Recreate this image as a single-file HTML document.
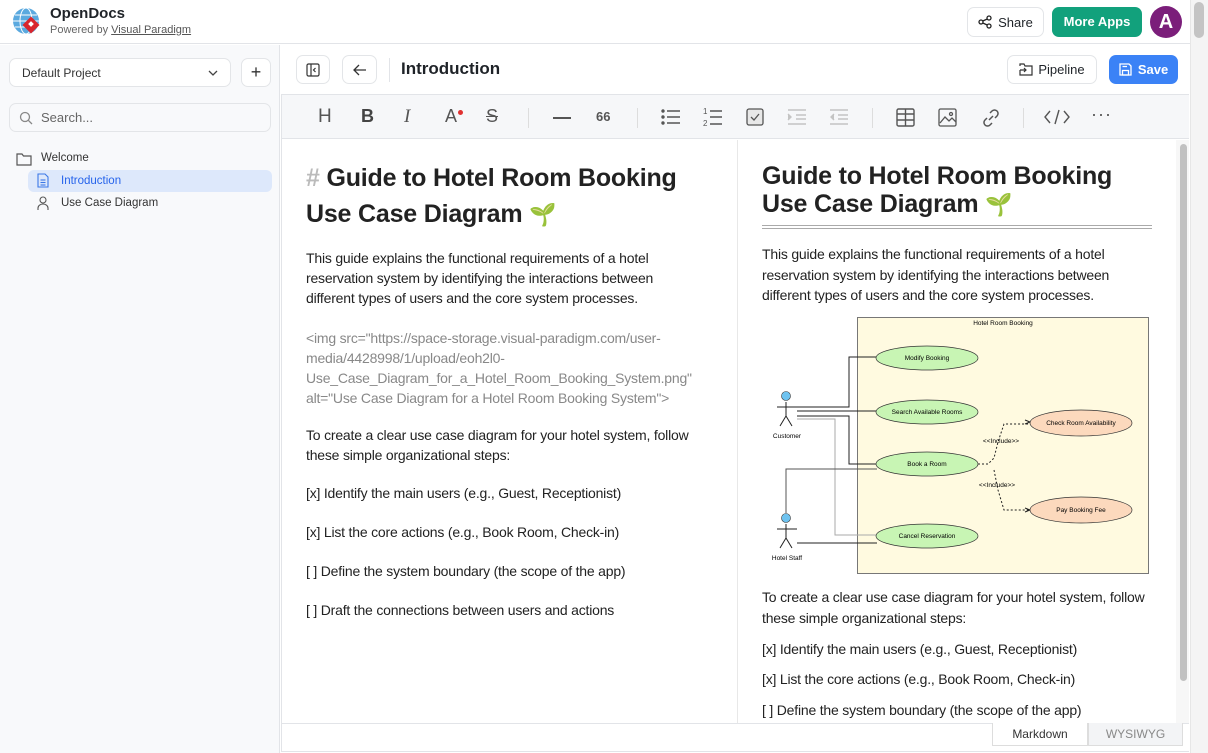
<!DOCTYPE html>
<html><head><meta charset="utf-8"><style>
*{box-sizing:border-box;margin:0;padding:0}
body{width:1208px;height:753px;overflow:hidden;background:#fff;font-family:"Liberation Sans",sans-serif;color:#1f2328;position:relative}
.a{position:absolute;white-space:nowrap}
.btn{position:absolute;border:1px solid #e3e5e8;border-radius:7px;background:#fff;display:flex;align-items:center;justify-content:center}
.tb{position:absolute;top:106px;color:#555}
.c{font-size:14px;color:#222;line-height:20px;letter-spacing:-0.2px}
</style></head><body>
<!-- header -->
<div class="a" style="left:0;top:0;width:1190px;height:44px;border-bottom:1px solid #e2e4e8;background:#fff"></div>
<svg class="a" style="left:12px;top:7px" width="30" height="30" viewBox="0 0 30 30"><circle cx="14" cy="14" r="13" fill="#5aa9df"/><g stroke="#fff" stroke-width="1" fill="none"><ellipse cx="14" cy="14" rx="6" ry="13"/><line x1="1" y1="14" x2="27" y2="14"/><line x1="3" y1="8" x2="25" y2="8"/><line x1="3" y1="20" x2="25" y2="20"/></g><rect x="13" y="12" width="12" height="12" transform="rotate(45 19 18)" fill="#d9262d"/><rect x="17" y="15" width="4" height="4" transform="rotate(45 19 17)" fill="#fff"/></svg>
<div class="a" style="left:50px;top:5px;font-size:15px;font-weight:bold;color:#1f2328">OpenDocs</div>
<div class="a" style="left:50px;top:24px;font-size:11px;color:#666">Powered by <span style="text-decoration:underline;color:#555">Visual Paradigm</span></div>
<div class="btn" style="left:967px;top:7px;width:77px;height:30px;font-size:13px;gap:6px"><svg width="14" height="14" viewBox="0 0 14 14" fill="none" stroke="#222" stroke-width="1.3"><circle cx="11" cy="3" r="2"/><circle cx="3" cy="7" r="2"/><circle cx="11" cy="11" r="2"/><line x1="4.8" y1="6" x2="9.2" y2="4"/><line x1="4.8" y1="8" x2="9.2" y2="10"/></svg>Share</div>
<div class="a" style="left:1052px;top:7px;width:90px;height:30px;border-radius:7px;background:#12a17c;color:#fff;font-size:13px;font-weight:bold;text-align:center;line-height:30px">More Apps</div>
<div class="a" style="left:1150px;top:6px;width:32px;height:32px;border-radius:50%;background:#7b1e7a;color:#fff;font-weight:bold;font-size:20px;text-align:center;line-height:32px">A</div>
<!-- page scrollbar -->
<div class="a" style="left:1190px;top:0;width:18px;height:753px;background:#f4f4f4;border-left:1px solid #e6e6e6"></div>
<div class="a" style="left:1194px;top:2px;width:10px;height:36px;border-radius:5px;background:#c4c4c4"></div>
<!-- sidebar -->
<div class="a" style="left:0;top:45px;width:280px;height:708px;background:#f8f9fb;border-right:1px solid #e2e4e8"></div>
<div class="btn" style="left:9px;top:58px;width:222px;height:29px;justify-content:space-between;padding:0 12px;font-size:12px;color:#333">Default Project<svg width="10" height="6" viewBox="0 0 10 6" fill="none" stroke="#444" stroke-width="1.3"><path d="M1 1l4 4 4-4"/></svg></div>
<div class="btn" style="left:241px;top:58px;width:30px;height:29px;font-size:18px;color:#333">+</div>
<div class="btn" style="left:9px;top:103px;width:262px;height:29px;justify-content:flex-start;padding-left:9px;gap:8px;font-size:13px;color:#666;background:#f8f9fb"><svg width="14" height="14" viewBox="0 0 14 14" fill="none" stroke="#888" stroke-width="1.3"><circle cx="6" cy="6" r="4.5"/><line x1="9.3" y1="9.3" x2="13" y2="13"/></svg>Search...</div>
<svg class="a" style="left:16px;top:152px" width="16" height="14" viewBox="0 0 16 14" fill="none" stroke="#555" stroke-width="1.2"><path d="M1 2h5l1.5 2H15v9H1z"/></svg>
<div class="a" style="left:41px;top:152px;font-size:11.5px;color:#333">Welcome</div>
<div class="a" style="left:28px;top:170px;width:244px;height:22px;border-radius:6px;background:#dde8fb"></div>
<svg class="a" style="left:37px;top:173px" width="12" height="15" viewBox="0 0 12 15" fill="none" stroke="#3b78e7" stroke-width="1.1"><path d="M1 1h7l3 3v10H1z"/><line x1="3.5" y1="7" x2="8.5" y2="7"/><line x1="3.5" y1="9.5" x2="8.5" y2="9.5"/><line x1="3.5" y1="12" x2="8.5" y2="12"/></svg>
<div class="a" style="left:61px;top:175px;font-size:11.5px;color:#2563eb">Introduction</div>
<svg class="a" style="left:37px;top:196px" width="12" height="15" viewBox="0 0 12 15" fill="none" stroke="#555" stroke-width="1.1"><circle cx="6" cy="4" r="3"/><path d="M1 14v-2a5 4 0 0 1 10 0v2"/></svg>
<div class="a" style="left:61px;top:197px;font-size:11.5px;color:#333">Use Case Diagram</div>
<!-- title bar -->
<div class="btn" style="left:296px;top:55px;width:34px;height:29px"><svg width="14" height="14" viewBox="0 0 14 14" fill="none" stroke="#333" stroke-width="1.2"><rect x="1" y="1" width="12" height="12" rx="1.5"/><line x1="5" y1="1" x2="5" y2="13"/><path d="M9.5 5l-2 2 2 2"/></svg></div>
<div class="btn" style="left:342px;top:55px;width:35px;height:29px"><svg width="14" height="12" viewBox="0 0 14 12" fill="none" stroke="#333" stroke-width="1.3"><path d="M6 1L1 6l5 5M1 6h12"/></svg></div>
<div class="a" style="left:389px;top:58px;width:1px;height:24px;background:#e2e4e8"></div>
<div class="a" style="left:401px;top:59px;font-size:17px;font-weight:bold;color:#1f2328">Introduction</div>
<div class="btn" style="left:1007px;top:55px;width:90px;height:29px;gap:5px;font-size:13px"><svg width="14" height="13" viewBox="0 0 14 13" fill="none" stroke="#333" stroke-width="1.2"><path d="M1 3V1h4l1 2h7v9H1V7"/><path d="M1 7h6M5 5l2 2-2 2"/></svg>Pipeline</div>
<div class="a" style="left:1109px;top:55px;width:69px;height:29px;border-radius:7px;background:#3b82f6;color:#fff;font-size:13px;font-weight:bold;display:flex;align-items:center;justify-content:center;gap:6px"><svg width="13" height="13" viewBox="0 0 13 13" fill="none" stroke="#fff" stroke-width="1.3"><path d="M1 1h9l2 2v9H1z"/><rect x="3.5" y="7.5" width="6" height="4.5"/><line x1="3.5" y1="3.5" x2="8" y2="3.5"/></svg>Save</div>
<!-- editor frame -->
<div class="a" style="left:281px;top:94px;width:908px;height:658px;border:1px solid #e2e4e8;border-right:none"></div>
<div class="a" style="left:282px;top:95px;width:907px;height:44px;background:#f6f7f9;border-bottom:1px solid #e2e4e8"></div>
<div class="a" style="left:737px;top:140px;width:1px;height:583px;background:#e8e8e8"></div>
<!-- toolbar icons -->
<div class="tb a" style="left:318px;top:106px;font-size:19px;color:#555">H</div>
<div class="tb a" style="left:361px;top:106px;font-size:18px;font-weight:bold;color:#444">B</div>
<div class="tb a" style="left:404px;top:106px;font-size:19px;font-style:italic;font-family:'Liberation Serif',serif;color:#555">I</div>
<div class="tb a" style="left:445px;top:106px;font-size:18px;color:#555">A</div>
<div class="a" style="left:458px;top:110px;width:5px;height:5px;border-radius:50%;background:#e03131"></div>
<div class="tb a" style="left:486px;top:106px;font-size:18px;color:#555;text-decoration:line-through">S</div>
<div class="a" style="left:528px;top:108px;width:1px;height:20px;background:#ddd"></div>
<div class="a" style="left:553px;top:117px;width:18px;height:2px;background:#555"></div>
<div class="tb a" style="left:596px;top:109px;font-size:13px;font-weight:bold;color:#555">66</div>
<div class="a" style="left:637px;top:108px;width:1px;height:20px;background:#ddd"></div>
<svg class="a" style="left:661px;top:108px" width="20" height="18" viewBox="0 0 20 18" stroke="#555" stroke-width="1.4" fill="#555"><circle cx="2" cy="3" r="1" /><circle cx="2" cy="9" r="1"/><circle cx="2" cy="15" r="1"/><path d="M6 3h13M6 9h13M6 15h13" fill="none"/></svg>
<svg class="a" style="left:703px;top:106px" width="20" height="22" viewBox="0 0 20 22" stroke="#555" stroke-width="1.4" fill="none"><path d="M7 5h12M7 11h12M7 18h12"/><text x="0" y="8" font-size="8" fill="#555" stroke="none" font-family="Liberation Sans">1</text><text x="0" y="20" font-size="8" fill="#555" stroke="none" font-family="Liberation Sans">2</text></svg>
<svg class="a" style="left:746px;top:108px" width="18" height="18" viewBox="0 0 18 18" fill="none" stroke="#555" stroke-width="1.3"><rect x="1" y="1" width="16" height="16" rx="2" fill="#e8e8e8"/><path d="M5 9l3 3 5-6"/></svg>
<svg class="a" style="left:787px;top:109px" width="20" height="16" viewBox="0 0 20 16" fill="none" stroke="#c4c4c4" stroke-width="1.4"><path d="M1 1h18M9 6h10M9 10h10M1 15h18"/><path d="M1 5l3 3-3 3" fill="#c4c4c4"/></svg>
<svg class="a" style="left:829px;top:109px" width="20" height="16" viewBox="0 0 20 16" fill="none" stroke="#c4c4c4" stroke-width="1.4"><path d="M1 1h18M9 6h10M9 10h10M1 15h18"/><path d="M5 5L2 8l3 3" fill="#c4c4c4"/></svg>
<div class="a" style="left:872px;top:108px;width:1px;height:20px;background:#ddd"></div>
<svg class="a" style="left:896px;top:108px" width="19" height="19" viewBox="0 0 19 19" fill="none" stroke="#555" stroke-width="1.4"><rect x="1" y="1" width="17" height="17" rx="1.5"/><path d="M1 6h17M9.5 1v17M1 12h17"/></svg>
<svg class="a" style="left:938px;top:108px" width="19" height="19" viewBox="0 0 19 19" fill="none" stroke="#555" stroke-width="1.3"><rect x="1" y="1" width="17" height="17" rx="1.5"/><path d="M2 15l5-6 4 4 3-3 4 4"/><circle cx="13" cy="6" r="1.5"/></svg>
<svg class="a" style="left:981px;top:108px" width="20" height="20" viewBox="0 0 20 20" fill="none" stroke="#555" stroke-width="1.5"><path d="M8 12l4-4M9 5l2-2a3.5 3.5 0 0 1 5 5l-2 2M11 15l-2 2a3.5 3.5 0 0 1-5-5l2-2"/></svg>
<div class="a" style="left:1023px;top:108px;width:1px;height:20px;background:#ddd"></div>
<svg class="a" style="left:1044px;top:109px" width="26" height="16" viewBox="0 0 26 16" fill="none" stroke="#555" stroke-width="1.4"><path d="M6 2L1 8l5 6M20 2l5 6-5 6M15 1l-4 14"/></svg>
<div class="tb a" style="left:1091px;top:104px;font-size:18px;color:#555;letter-spacing:1px">···</div>
<!-- left markdown -->
<div class="a" style="left:306px;top:160px;font-size:25px;font-weight:bold;line-height:36px;color:#222;letter-spacing:-0.2px"><span style="color:#bbb">#</span> Guide to Hotel Room Booking<br>Use Case Diagram <span style="color:#58a832;font-size:22px">🌱</span></div>
<div class="a c" style="left:306px;top:248px">This guide explains the functional requirements of a hotel<br>reservation system by identifying the interactions between<br>different types of users and the core system processes.</div>
<div class="a c" style="left:306px;top:328px;color:#888">&lt;img src="https://space-storage.visual-paradigm.com/user-<br>media/4428998/1/upload/eoh2l0-<br>Use_Case_Diagram_for_a_Hotel_Room_Booking_System.png"<br>alt="Use Case Diagram for a Hotel Room Booking System"&gt;</div>
<div class="a c" style="left:306px;top:425px">To create a clear use case diagram for your hotel system, follow<br>these simple organizational steps:</div>
<div class="a c" style="left:306px;top:483px">[x] Identify the main users (e.g., Guest, Receptionist)</div>
<div class="a c" style="left:306px;top:522px">[x] List the core actions (e.g., Book Room, Check-in)</div>
<div class="a c" style="left:306px;top:561px">[ ] Define the system boundary (the scope of the app)</div>
<div class="a c" style="left:306px;top:600px">[ ] Draft the connections between users and actions</div>
<!-- right preview -->
<div class="a" style="left:762px;top:162px;font-size:25px;font-weight:bold;line-height:28px;color:#222;letter-spacing:-0.2px">Guide to Hotel Room Booking<br>Use Case Diagram <span style="color:#58a832;font-size:22px">🌱</span></div>
<div class="a" style="left:762px;top:225px;width:390px;height:4px;border-top:1px solid #aaa;border-bottom:1px solid #aaa"></div>
<div class="a c" style="left:762px;top:244px;line-height:20.5px">This guide explains the functional requirements of a hotel<br>reservation system by identifying the interactions between<br>different types of users and the core system processes.</div>
<svg class="a" style="left:750px;top:310px" width="410" height="270" viewBox="750 310 410 270" font-family="Liberation Sans" font-size="6.5" text-anchor="middle">
<rect x="857.5" y="317.5" width="291" height="256" fill="#fffae0" stroke="#777"/>
<text x="1003" y="325">Hotel Room Booking</text>
<g fill="none" stroke="#222" stroke-width="1">
<path d="M797 407h52v-50h28M797 411h80M797 416h52v48h28"/>
<path d="M797 419h38v116h42" stroke="#aaa"/>
<path d="M786 513v-44h91" stroke="#555"/>
<path d="M797 543h80"/>
<path d="M978 464h10l6-6l4-16l6-18h26M994 470l4 20l6 20h26" stroke-dasharray="2 2"/>
<path d="M1025 420l5 2-5 2M1025 508l5 2-5 2"/>
<path d="M777 407h20M786 402v14l-6 10M786 416l6 10M777 529h20M786 524v14l-6 10M786 538l6 10"/>
</g>
<circle cx="786" cy="396" r="4.5" fill="#6ec3f0" stroke="#333" stroke-width=".6"/>
<circle cx="786" cy="518" r="4.5" fill="#6ec3f0" stroke="#333" stroke-width=".6"/>
<text x="787" y="438">Customer</text><text x="787" y="560">Hotel Staff</text>
<g stroke="#333" stroke-width=".7"><ellipse cx="927" cy="358" rx="51" ry="12" fill="#c8f5b4"/><ellipse cx="927" cy="412" rx="51" ry="12" fill="#c8f5b4"/><ellipse cx="927" cy="464" rx="51" ry="12" fill="#c8f5b4"/><ellipse cx="927" cy="536" rx="51" ry="12" fill="#c8f5b4"/><ellipse cx="1081" cy="423" rx="51" ry="13" fill="#fcd9bd"/><ellipse cx="1081" cy="510" rx="51" ry="13" fill="#fcd9bd"/></g>
<text x="927" y="360">Modify Booking</text><text x="927" y="414">Search Available Rooms</text><text x="927" y="466">Book a Room</text><text x="927" y="538">Cancel Reservation</text><text x="1081" y="425">Check Room Availability</text><text x="1081" y="512">Pay Booking Fee</text>
<text x="1001" y="443">&lt;&lt;Include&gt;&gt;</text><text x="997" y="487">&lt;&lt;Include&gt;&gt;</text>
</svg>
<div class="a c" style="left:762px;top:587px;line-height:20.5px">To create a clear use case diagram for your hotel system, follow<br>these simple organizational steps:</div>
<div class="a c" style="left:762px;top:639px">[x] Identify the main users (e.g., Guest, Receptionist)</div>
<div class="a c" style="left:762px;top:669px">[x] List the core actions (e.g., Book Room, Check-in)</div>
<div class="a c" style="left:762px;top:700px">[ ] Define the system boundary (the scope of the app)</div>
<!-- preview scrollbar -->
<div class="a" style="left:1176px;top:140px;width:13px;height:583px;background:#f7f7f7"></div>
<div class="a" style="left:1180px;top:144px;width:7px;height:537px;border-radius:4px;background:#c1c1c1"></div>
<!-- footer -->
<div class="a" style="left:282px;top:723px;width:907px;height:1px;background:#e2e4e8"></div>
<div class="a" style="left:992px;top:723px;width:96px;height:23px;border:1px solid #ddd;border-top:none;background:#fff;font-size:12px;color:#333;text-align:center;line-height:23px">Markdown</div>
<div class="a" style="left:1088px;top:723px;width:95px;height:23px;border:1px solid #ddd;border-top:none;background:#f3f4f6;font-size:12px;color:#888;text-align:center;line-height:23px">WYSIWYG</div>
</body></html>
